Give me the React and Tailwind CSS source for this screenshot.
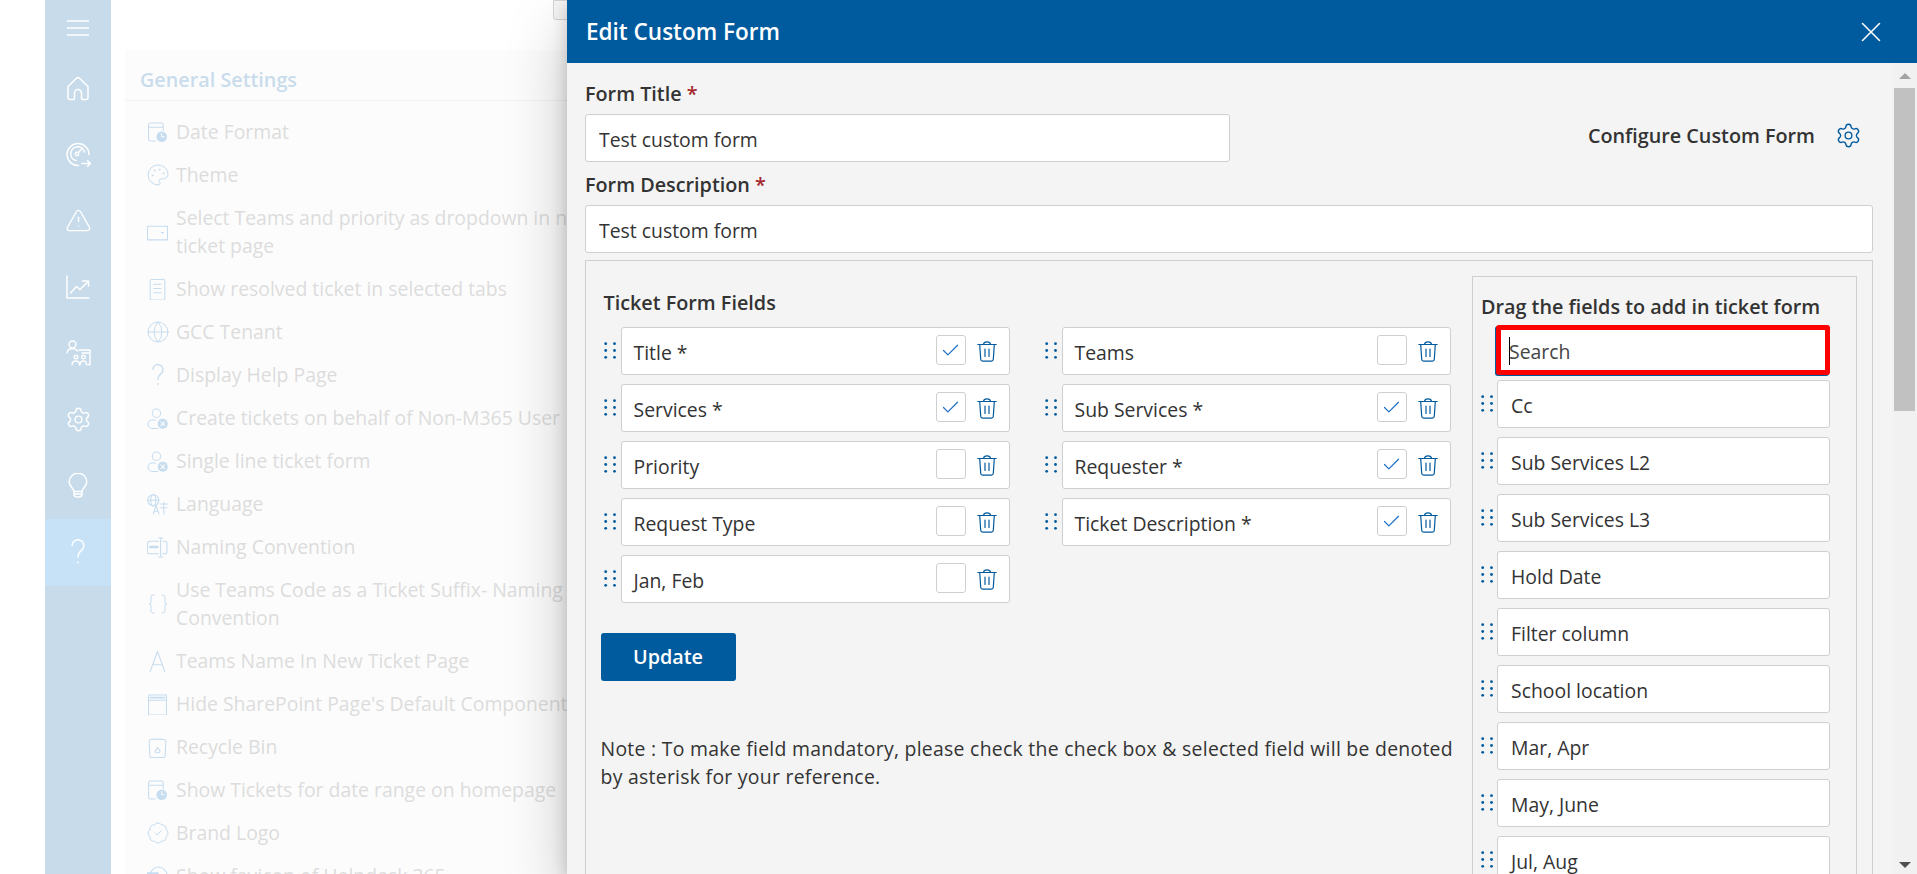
import React from "react";
import { TriangleAlert, Settings, Palette, Globe, X, Check, Braces, BadgeCheck } from "lucide-react";

const Q = ({ size = 24, className = "", sw = 1.3 }) => (
  <svg width={size} height={size} viewBox="0 0 24 24" fill="none" stroke="currentColor" strokeWidth={sw} strokeLinecap="round" className={className}>
    <path d="M7 6.500a5 5 0 1 1 8.200 3.900c-2.200 1.800-3.200 3-3.200 6" />
    <path d="M12 20.500v1" />
  </svg>
);

const Hamburger = () => (
  <svg width="22" height="16" viewBox="0 0 22 16" fill="none" stroke="#fff" strokeWidth="1.3">
    <path d="M0 1h22M0 8h22M0 15h22" />
  </svg>
);

const si = { fill: "none", stroke: "#fff", strokeWidth: 1.5, strokeLinecap: "round", strokeLinejoin: "round" };

const HomeIcon = () => (
  <svg width="24" height="25" viewBox="0 0 24 25" {...si}>
    <path d="M2 10.500L10.500 2.200a2 2 0 0 1 3 0L22 10.500V21.500a2 2 0 0 1-2 2h-3.500a1 1 0 0 1-1-1V17a3.500 3.500 0 0 0-7 0v5.500a1 1 0 0 1-1 1H4a2 2 0 0 1-2-2z" />
  </svg>
);

const GaugeIcon = () => (
  <svg width="25" height="25" viewBox="0 0 25 25" {...si}>
    <path d="M12.500 23.500A11 11 0 1 1 23 12.500" />
    <path d="M10 18.500A7 7 0 1 1 18.500 10" />
    <circle cx="11" cy="12" r="1.700" />
    <path d="M12.500 10.500L16.500 6" />
    <path d="M16 21.500h8.500M21.500 18.500l3 3-3 3" />
  </svg>
);

const ChartIcon = () => (
  <svg width="24" height="24" viewBox="0 0 24 24" {...si}>
    <path d="M1 1v22h22" />
    <path d="M4.500 18l6-6.500 3.500 3L22 6.500" />
    <path d="M16.500 6H22.500V11" />
  </svg>
);

const BulbIcon = () => (
  <svg width="20" height="25" viewBox="0 0 20 25" {...si}>
    <path d="M6 18.500C6 15.500 1.200 13.500 1.200 9a8.800 8.800 0 0 1 17.600 0c0 4.500-4.800 6.500-4.800 9.500z" />
    <path d="M6 18.500v2.500a3 3 0 0 0 3 3h2a3 3 0 0 0 3-3v-2.500M6.500 21h7" />
  </svg>
);

const PeopleIcon = () => (
  <svg width="25" height="26" viewBox="0 0 25 26" fill="none" stroke="#fff" strokeWidth="1.4" strokeLinecap="round" strokeLinejoin="round">
    <circle cx="6.500" cy="4.500" r="3.500" />
    <path d="M1 13c.5-3 2.500-4.500 5.500-4.500 2 0 3.500.7 5 2.500" />
    <path d="M13 10h11v14.500h-2M16 13h8" />
    <circle cx="10" cy="17" r="1.800" />
    <circle cx="17.500" cy="17" r="1.800" />
    <path d="M6 25c0-2.500 1.500-4 4-4s3.500 1.500 3.500 4M14 25c0-2.500 1.500-4 3.500-4s3 1.500 3 4" />
  </svg>
);

const ico = { width: 21, height: 21, viewBox: "0 0 20 20", fill: "none", stroke: "currentColor", strokeWidth: 1, strokeLinecap: "round", strokeLinejoin: "round" };

const CalClock = () => (
  <svg {...ico}>
    <path d="M8 18H3a1.500 1.500 0 0 1-1.500-1.500v-14A1.500 1.500 0 0 1 3 1h11a1.500 1.500 0 0 1 1.500 1.500V8M1.500 5h14" />
    <circle cx="14" cy="14" r="5" fill="currentColor" stroke="none" />
    <path d="M14 11v3h2.500" stroke="#fcfcfc" />
  </svg>
);
const DropBox = () => (
  <svg {...ico}>
    <rect x="0.500" y="4" width="19" height="13" />
    <path d="M13 9.500h3.500l-1.750 2z" fill="currentColor" stroke="none" />
  </svg>
);
const Doc = () => (
  <svg {...ico}>
    <rect x="3" y="0.500" width="14" height="19.500" rx="1.500" />
    <path d="M6.500 5h7M6.500 9h7M6.500 13h7" />
  </svg>
);
const UserX = () => (
  <svg {...ico}>
    <circle cx="9" cy="5" r="4" />
    <path d="M8 11.500H5a4 4 0 0 0 0 8h5" />
    <circle cx="15" cy="15" r="4.800" fill="currentColor" stroke="none" />
    <path d="M13.200 13.200l3.600 3.600M16.800 13.200l-3.600 3.600" stroke="#fcfcfc" />
  </svg>
);
const Lang = () => (
  <svg {...ico}>
    <circle cx="6" cy="6" r="5.300" />
    <ellipse cx="6" cy="6" rx="2.400" ry="5.300" />
    <path d="M.7 6h10.600" />
    <path d="M6 19l2.700-8 2.700 8M7 16.500h3.400" fill="#fcfcfc" />
    <path d="M12.500 9.500h7M16 8v11M13 13h6" />
  </svg>
);
const Naming = () => (
  <svg {...ico}>
    <path d="M11 4H2.500a2 2 0 0 0-2 2v8a2 2 0 0 0 2 2H11M15 4h2a2 2 0 0 1 2 2v8a2 2 0 0 1-2 2h-2" />
    <path d="M11 1h4M13 1v18M11 19h4" />
    <path d="M3 9.500h7" strokeWidth="2.200" />
  </svg>
);
const LetterA = () => (
  <svg {...ico}>
    <path d="M3 19.500L10 .5l7 19M5.500 13h9" />
  </svg>
);
const PageBox = () => (
  <svg {...ico}>
    <rect x="1.500" y="1" width="17" height="19" />
    <path d="M1.500 6h17" />
    <path d="M3.500 3.500h13" strokeWidth="1.800" />
  </svg>
);
const Bin = () => (
  <svg {...ico}>
    <path d="M2 3.500c0-2 16-2 16 0M2 3.500l.7 14.500a1.500 1.500 0 0 0 1.500 1.500h11.600a1.500 1.500 0 0 0 1.500-1.500L18 3.500" />
    <path d="M8 13l2-3 2 3M12.500 13.500l-1 1.500h-3l-1-1.500" />
  </svg>
);
const Favicon = () => (
  <svg {...ico}>
    <circle cx="11" cy="9" r="8" />
    <rect x="0" y="6" width="11" height="11" fill="currentColor" stroke="none" />
  </svg>
);

const settings = [
  [CalClock, ["Date Format"]],
  [Palette, ["Theme"]],
  [DropBox, ["Select Teams and priority as dropdown in new", "ticket page"]],
  [Doc, ["Show resolved ticket in selected tabs"]],
  [Globe, ["GCC Tenant"]],
  [Q, ["Display Help Page"]],
  [UserX, ["Create tickets on behalf of Non-M365 User"]],
  [UserX, ["Single line ticket form"]],
  [Lang, ["Language"]],
  [Naming, ["Naming Convention"]],
  [Braces, ["Use Teams Code as a Ticket Suffix- Naming", "Convention"]],
  [LetterA, ["Teams Name In New Ticket Page"]],
  [PageBox, ["Hide SharePoint Page's Default Components"]],
  [Bin, ["Recycle Bin"]],
  [CalClock, ["Show Tickets for date range on homepage"]],
  [BadgeCheck, ["Brand Logo"]],
  [Favicon, ["Show favicon of Helpdesk 365"]],
];

const Handle = () => (
  <svg width="12" height="17" viewBox="0 0 12 17" fill="#005a9e" className="shrink-0">
    <circle cx="1.700" cy="1.700" r="1.400" />
    <circle cx="10.500" cy="1.700" r="1.400" />
    <circle cx="1.700" cy="8.500" r="1.400" />
    <circle cx="10.500" cy="8.500" r="1.400" />
    <circle cx="1.700" cy="15.300" r="1.400" />
    <circle cx="10.500" cy="15.300" r="1.400" />
  </svg>
);

const Trash = () => (
  <svg width="20" height="22" viewBox="0 0 20 22" fill="none" stroke="#005a9e" strokeWidth="1.200" strokeLinecap="round" strokeLinejoin="round" className="shrink-0">
    <path d="M.8 4.500h18.400" />
    <path d="M6.500 4.500C6.800 1 13.200 1 13.500 4.500" />
    <path d="M2.700 4.500l1 14.800a2 2 0 0 0 2 1.900h8.600a2 2 0 0 0 2-1.900l1-14.800" />
    <path d="M8 9v7.500M12 9v7.500" />
  </svg>
);

const Field = ({ label, checked }) => (
  <div className="flex items-center gap-[5px]">
    <Handle />
    <div className="flex-1 h-[48px] bg-white border border-[#cfcfcf] rounded-[3px] flex items-center pl-[12px] pr-[12px]">
      <span className="flex-1 text-[#333] pt-[4px]">{label}</span>
      <span className="w-[30px] h-[30px] border border-[#cfcfcf] rounded-[3px] flex items-center justify-center mr-[11px] -mt-px">
        {checked && <Check size={21} strokeWidth={1.4} className="text-[#1f6fc4]" />}
      </span>
      <Trash />
    </div>
  </div>
);

const Source = ({ label }) => (
  <div className="flex items-center gap-[4px]">
    <Handle />
    <div className="flex-1 h-[48px] bg-white border border-[#cfcfcf] rounded-[3px] flex items-center pl-[13px] pt-[4px] text-[#333]">{label}</div>
  </div>
);

const col1 = [["Title *", true], ["Services *", true], ["Priority", false], ["Request Type", false], ["Jan, Feb", false]];
const col2 = [["Teams", false], ["Sub Services *", true], ["Requester *", true], ["Ticket Description *", true]];
const sources = ["Cc", "Sub Services L2", "Sub Services L3", "Hold Date", "Filter column", "School location", "Mar, Apr", "May, June", "Jul, Aug"];

const semi = "font-semibold text-[19.8px]";

export default function App() {
  return (
    <div className="relative flex h-[874px] w-[1917px] overflow-hidden bg-white pl-[45px] font-['Open_Sans',sans-serif] text-[19.4px] leading-[28px]">
      {/* faded sidebar */}
      <aside className="w-[66px] shrink-0 bg-[#c7dbea] text-white flex flex-col items-center">
        <div className="h-[55px] w-full flex items-center justify-center"><Hamburger /></div>
        <div className="h-[66.2px] w-full flex items-center justify-center"><HomeIcon /></div>
        <div className="h-[66.2px] w-full flex items-center justify-center"><GaugeIcon /></div>
        <div className="h-[66.2px] w-full flex items-center justify-center"><TriangleAlert size={27} strokeWidth={1.3} /></div>
        <div className="h-[66.2px] w-full flex items-center justify-center"><ChartIcon /></div>
        <div className="h-[66.2px] w-full flex items-center justify-center"><PeopleIcon /></div>
        <div className="h-[66.2px] w-full flex items-center justify-center"><Settings size={27} strokeWidth={1.3} /></div>
        <div className="h-[66.2px] w-full flex items-center justify-center"><BulbIcon /></div>
        <div className="h-[66.2px] mt-[1px] w-full flex items-center justify-center bg-[#c7e2f6]"><Q size={28} sw={1.2} /></div>
      </aside>

      {/* faded page */}
      <main className="flex-1 pl-[14px]">
        <div className="h-[50px]">
          <div className="ml-[428px] w-[30px] h-[20px] border border-[#d6d6d6] rounded-bl-[3px] bg-[#f6f6f6]" />
        </div>
        <section className="bg-[#fcfcfc] h-[824px] overflow-hidden">
          <h2 className="h-[51px] border-b border-[#f1f1f1] text-[#c9dcec] font-semibold text-[19.8px] pl-[15px] pt-[16px]">General Settings</h2>
          <ul className="pl-[22px] pt-[17px] flex flex-col gap-[15px] text-[#dcdcdc]">
            {settings.map(([Icon, lines], i) => (
              <li key={i} className="flex items-center gap-[8px] whitespace-nowrap">
                <span className="w-[21px] h-[21px] flex items-center justify-center text-[#c6dcef] shrink-0">
                  <Icon size={24} strokeWidth={1} className="shrink-0" />
                </span>
                <span className="flex flex-col">
                  {lines.map((l) => <span key={l}>{l}</span>)}
                </span>
              </li>
            ))}
          </ul>
        </section>
      </main>

      {/* drawer */}
      <div className="absolute right-0 top-0 bottom-0 w-[1350px] bg-[#f4f4f4] flex flex-col shadow-[0_25px_58px_rgba(0,0,0,0.22),0_5px_15px_rgba(0,0,0,0.18)]">
        <header className="h-[63px] shrink-0 bg-[#005a9e] flex items-center justify-between pl-[19px] pr-[29px] text-white">
          <h1 className="font-semibold text-[22.5px]">Edit Custom Form</h1>
          <X size={34} strokeWidth={1.1} />
        </header>
        <div className="flex-1 flex overflow-hidden">
          <div className="flex-1 pl-[18px] pr-[19px] text-[#333] overflow-hidden">
            <div className="flex items-start">
              <div className="w-[645px] pt-[17px]">
                <label className={`block ${semi} mb-[6px]`}>Form Title <span className="text-[#a4262c]">*</span></label>
                <input readOnly value="Test custom form" className="w-full h-[48px] bg-white border border-[#cfcfcf] rounded-[3px] pl-[13px] pt-[2px] outline-none" />
              </div>
              <div className="ml-auto mt-[57px] mr-[11px] flex items-center gap-[20px]">
                <span className={`${semi} pt-[2px]`}>Configure Custom Form</span>
                <Settings size={27} strokeWidth={1.2} className="text-[#005a9e]" />
              </div>
            </div>
            <label className={`block ${semi} mt-[9px] mb-[6px]`}>Form Description <span className="text-[#a4262c]">*</span></label>
            <input readOnly value="Test custom form" className="w-full h-[48px] bg-white border border-[#cfcfcf] rounded-[3px] pl-[13px] pt-[2px] outline-none block" />

            <div className="mt-[7px] border-[1.5px] border-[#cfcfcf] border-b-0 flex h-[700px] pl-[14.5px] pt-[14.5px]">
              <div className="w-[871px] shrink-0">
                <h3 className={`${semi} ml-[3px] mt-[13px] mb-[10px]`}>Ticket Form Fields</h3>
                <div className="ml-[3px] grid grid-cols-[406px_406px] gap-x-[35px] items-start">
                  <div className="flex flex-col gap-[9px]">
                    {col1.map(([l, c]) => <Field key={l} label={l} checked={c} />)}
                  </div>
                  <div className="flex flex-col gap-[9px]">
                    {col2.map(([l, c]) => <Field key={l} label={l} checked={c} />)}
                  </div>
                </div>
                <button className={`mt-[30px] w-[135px] h-[48px] bg-[#005a9e] text-white ${semi} rounded-[3px] block`}>Update</button>
                <p className="mt-[54px] w-[860px] tracking-[0.28px]">Note : To make field mandatory, please check the check box &amp; selected field will be denoted by asterisk for your reference.</p>
              </div>
              <div className="w-[385px] shrink-0 border-[1.5px] border-[#cfcfcf] border-b-0 pl-[8.5px] pt-[16px]">
                <h3 className={`${semi} whitespace-nowrap mb-[4px]`}>Drag the fields to add in ticket form</h3>
                <div className="w-[349px]">
                  <div className="relative ml-[15px] h-[50px] border-[5px] border-[#ff0000] rounded-[3px] shadow-[-1px_1px_0_#005a9e] bg-white mb-[5px]">
                    <input readOnly placeholder="Search" className="w-full h-full pl-[8px] pt-[4px] outline-none placeholder:text-[#444]" />
                    <span className="absolute left-[8px] top-[7px] w-px h-[28px] bg-black" />
                  </div>
                  <div className="flex flex-col gap-[9px]">
                    {sources.map((s) => <Source key={s} label={s} />)}
                  </div>
                </div>
              </div>
            </div>
          </div>
          {/* scrollbar */}
          <div className="w-[25px] shrink-0 bg-[#f1f1f1] flex flex-col items-center relative">
            <div className="w-0 h-0 mt-[10px] border-x-[6px] border-x-transparent border-b-[6px] border-b-[#a3a3a3]" />
            <div className="w-[21px] h-[323px] mt-[9px] bg-[#c1c1c1]" />
            <div className="w-0 h-0 mt-auto mb-[6px] border-x-[6px] border-x-transparent border-t-[6px] border-t-[#505050]" />
          </div>
        </div>
      </div>
    </div>
  );
}
